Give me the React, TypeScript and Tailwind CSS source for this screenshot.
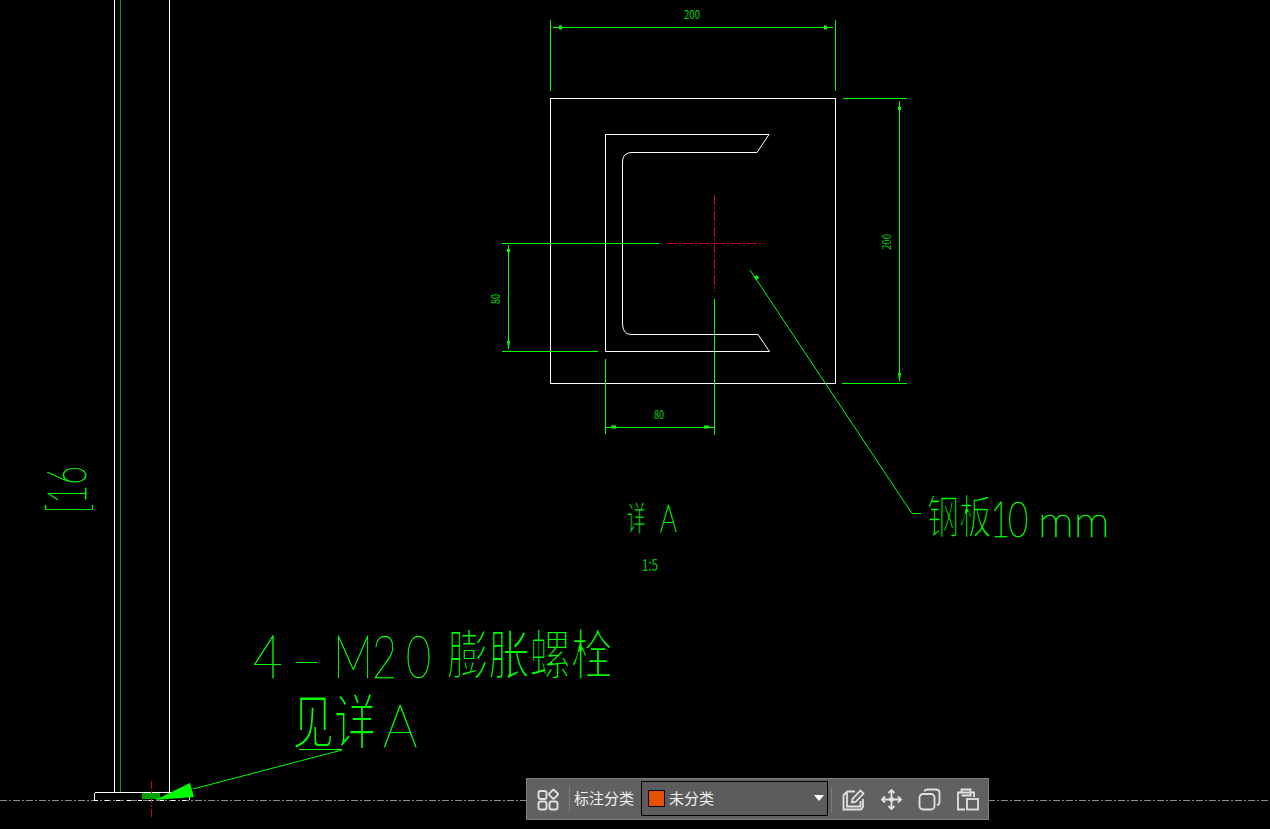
import { ReactNode } from "react";

const GREEN = "#00ff00";
const CJK = '"Noto Sans CJK SC", "Liberation Sans", sans-serif';
const LATIN = 'Lato, "Liberation Sans", sans-serif';

interface ICadTextProps {
  x: number;
  y: number;
  sx: number;
  size: number;
  thin?: number;
  rotate?: number;
  latin?: boolean;
  children: ReactNode;
}

// CAD text: squeezed to the measured width. Latin is a hairline face with a bit of green stroke,
// CJK only has regular weight so a black stroke on top eats it down to a thin line
const CadText = ({ x, y, sx, size, thin = 1, rotate = 0, latin, children }: ICadTextProps) => (
  <text
    fontSize={size}
    fontFamily={latin ? LATIN : CJK}
    fontWeight={latin ? 100 : 400}
    fill={GREEN}
    stroke={latin ? GREEN : "#000"}
    strokeWidth={latin ? 0.6 : thin}
    transform={`translate(${x} ${y}) rotate(${rotate}) scale(${sx} 1)`}
  >
    {children}
  </text>
);

const Drawing = () => (
  <svg
    width="1270"
    height="829"
    viewBox="0 0 1270 829"
    fill="none"
    className="absolute inset-0"
  >
    <g shapeRendering="crispEdges" strokeWidth="1">
      {/* column */}
      <path d="M114.5 0V792M169.5 0V792" stroke="#fff" />
      <path d="M120.5 0V792" stroke="#00a000" />
      <path d="M94.5 792.5H189.5V800M94.5 792.5V800" stroke="#fff" />
      <path d="M0 800.5H1270" stroke="#8c8c8c" strokeDasharray="7 2 2 2" />
      <path d="M94 800.5H190" stroke="#fff" strokeDasharray="4 7" />
      <path d="M151.5 781V818" stroke="#c00040" strokeDasharray="8 2 2 2" />

      {/* plate and channel */}
      <rect x="550.5" y="98.5" width="285" height="285" stroke="#fff" />
      <path
        d="M714.5 299V435M605.5 359V434M550.5 20V91M835.5 20V91M843 98.5H907M842 383.5H907M899.5 101V381M502 243.5H659M502 351.5H598M508.5 245V349M553 27.5H561M562 27.5H833M606 427.5H714"
        stroke={GREEN}
      />
      <path
        d="M714.5 195V292M667 243.5H764"
        stroke="#c00040"
        strokeDasharray="10 2 2 2"
      />
      <path d="M299 749.5H342M912 513.5H921" stroke={GREEN} />
    </g>

    <path
      d="M605.5 134.5H769L757 152.5H631Q622.5 153 622.5 162V323Q622.5 334.5 631 334.5H758L769.5 351.5H605.5Z"
      stroke="#fff"
    />

    {/* leaders */}
    <path d="M750 270L912 513.5M193 789L342 750" stroke={GREEN} />

    {/* arrow heads */}
    <path
      d="M559 25.5h3v4h-3zM824 25.5h3v4h-3zM898 107h3v3h-3zM898 373h3l-1 7h-1zM507 249h3v3h-3zM507 341h3l-1 7h-1zM611 425.5h5v3h-5zM704 425.5h5v3h-5zM754 277l3-2 2 3-3 2z"
      fill={GREEN}
    />

    {/* base anchor */}
    <path d="M142 793H160V799H142Z" fill="#00a000" />
    <path d="M155 800L190 783L194 797Z" fill={GREEN} />

    {/* annotations */}
    <CadText x={684} y={19} sx={0.8} size={12} thin={0.2}>200</CadText>
    <CadText x={891} y={250} sx={0.8} size={12} thin={0.2} rotate={-90}>200</CadText>
    <CadText x={500} y={304} sx={0.75} size={12} thin={0.2} rotate={-90}>80</CadText>
    <CadText x={654} y={419} sx={0.75} size={12} thin={0.2}>80</CadText>
    <CadText x={642} y={571} sx={0.68} size={17} thin={0.3}>1:5</CadText>
    <CadText x={86} y={513} sx={0.6} size={54} rotate={-90} latin>[16</CadText>
    <CadText x={627} y={531} sx={0.55} size={34} thin={1.1}>详</CadText>
    <CadText x={660} y={532} sx={0.7} size={38} latin>A</CadText>
    <CadText x={927} y={533} sx={0.7} size={46} thin={1.7}>钢板</CadText>
    <CadText x={990} y={537} sx={0.7} size={50} latin>1</CadText>
    <CadText x={1008} y={537} sx={0.7} size={50} latin>0</CadText>
    <CadText x={1038} y={537} sx={1.03} size={44} latin>mm</CadText>
    <CadText x={253} y={678} sx={0.85} size={60} latin>4</CadText>
    <CadText x={290} y={680} sx={1.5} size={60} latin>-</CadText>
    <CadText x={333} y={678} sx={0.75} size={60} latin>M</CadText>
    <CadText x={372} y={678} sx={0.72} size={60} latin>2</CadText>
    <CadText x={406} y={678} sx={0.72} size={60} latin>0</CadText>
    <CadText x={447} y={675} sx={0.765} size={54} thin={1.8}>膨胀螺栓</CadText>
    <CadText x={292} y={744} sx={0.7} size={60} thin={2.2}>见详</CadText>
    <CadText x={383} y={747} sx={0.9} size={60} latin>A</CadText>
  </svg>
);

const Divider = () => <div className="w-px h-[25px] bg-[#7c7c7c]" />;

const Toolbar = () => (
  <div className="absolute left-[526px] top-[778px] w-[463px] h-[42px] flex items-center bg-[#616161] border border-[#808080] text-[#f2f2f2] text-[15px] font-['Noto_Sans_CJK_SC',sans-serif]">
    <div className="w-[42px] flex justify-center shrink-0">
      <svg width="22" height="23" viewBox="0 0 22 23" fill="none" stroke="#e2e2e2" strokeWidth="1.9">
        <rect x="1.5" y="3" width="8" height="8" rx="2" />
        <rect x="13" y="2.8" width="7" height="7" rx="1.5" transform="rotate(45 16.5 6.3)" />
        <rect x="1.5" y="13.5" width="8" height="8" rx="2" />
        <rect x="12.5" y="13.5" width="8" height="8" rx="2" />
      </svg>
    </div>
    <Divider />
    <span className="ml-1 w-[63px] shrink-0 mb-[2px]">标注分类</span>
    <div className="ml-[4px] mb-[2px] w-[187px] h-[35px] flex items-center bg-[#5c5c5c] border border-black pl-[6px] pr-[3px] shrink-0">
      <div className="w-[17px] h-[17px] bg-[#e65100] border border-black" />
      <span className="ml-[4px] flex-1">未分类</span>
      <div className="w-0 h-0 border-x-[5px] border-x-transparent border-t-[6px] border-t-white" />
    </div>
    <div className="ml-[3px]">
      <Divider />
    </div>
    <div className="flex items-center ml-[10px] gap-[15px]">
      <svg width="23" height="23" viewBox="0 0 23 23" fill="none" stroke="#e2e2e2" strokeWidth="1.8">
        <path d="M13 3.5H5.5L1.5 7V21.5H19L21 19V11" />
        <path d="M5 5V18.5H18.5V13" />
        <path d="M10 14.5L10.5 11L18.5 2.5L21.5 5.5L13.5 14Z" />
      </svg>
      <svg width="23" height="23" viewBox="0 0 23 23" fill="none" stroke="#e2e2e2" strokeWidth="1.8">
        <path d="M11.5 2V21M2 11.5H21" />
        <path d="M8.5 5L11.5 2L14.5 5M8.5 18L11.5 21L14.5 18M5 8.5L2 11.5L5 14.5M18 8.5L21 11.5L18 14.5" />
        <circle cx="11.5" cy="11.5" r="1.5" fill="#e2e2e2" />
      </svg>
      <svg width="23" height="23" viewBox="0 0 23 23" fill="none" stroke="#e2e2e2" strokeWidth="1.8">
        <rect x="1.5" y="6" width="15" height="15.5" rx="3.5" />
        <path d="M6.5 3.5Q7 1.5 9.5 1.5H18Q21.5 1.5 21.5 5V14Q21.5 16.5 19 17" />
      </svg>
      <svg width="23" height="23" viewBox="0 0 23 23" fill="none" stroke="#e2e2e2" strokeWidth="1.8">
        <path d="M9 21.5H2V4.5H18V9" />
        <path d="M5.5 4.5V1.5H14.5V4.5M5.5 7.5H14.5V4.5" />
        <rect x="11" y="11" width="11" height="10.5" />
      </svg>
    </div>
  </div>
);

const App = () => {
  return (
    <div className="relative w-[1270px] h-[829px] overflow-hidden bg-black">
      <Drawing />
      <Toolbar />
    </div>
  );
};

export default App;
